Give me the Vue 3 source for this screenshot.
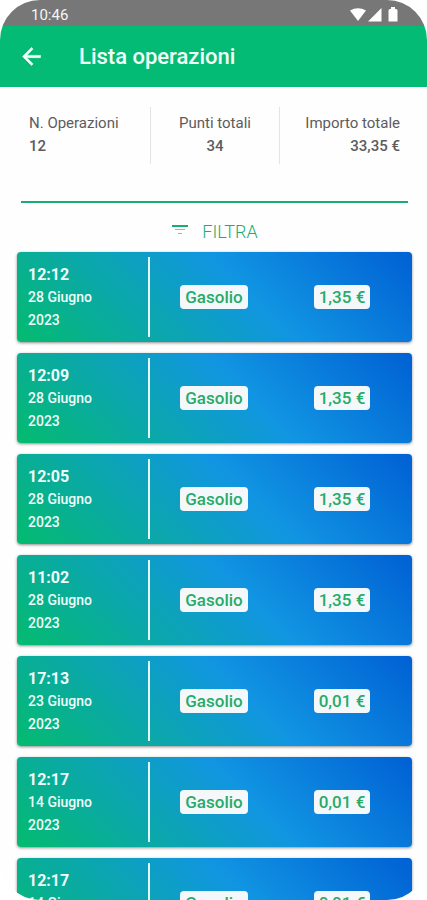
<template>
  <div class="screen">
    <div class="status-bar">
      <span>10:46</span>
      <svg class="status-icons" viewBox="0 0 50 16" aria-hidden="true">
        <path d="M0 3.5Q8 -1 16 3.5L8 14Z" />
        <path d="M31.500 1V14.500H18Z" />
        <path d="M38.500 3.500Q38.500 2 40 2H41V0H45V2H46Q47.500 2 47.500 3.500V14.500H38.500Z" />
      </svg>
    </div>

    <header class="app-bar">
      <button class="back" type="button" aria-label="Indietro">
        <svg viewBox="0 0 24 24" aria-hidden="true">
          <path d="M20 11H7.830l5.590-5.590L12 4l-8 8 8 8 1.410-1.410L7.830 13H20v-2z" />
        </svg>
      </button>
      <h1>Lista operazioni</h1>
    </header>

    <dl class="summary">
      <div v-for="item in summary" :key="item.label" class="summary-item">
        <dt>{{ item.label }}</dt>
        <dd>{{ item.value }}</dd>
      </div>
    </dl>

    <button class="filter" type="button">
      <svg viewBox="0 0 18 12" aria-hidden="true">
        <path class="line-top" d="M1 2H17" />
        <path class="line" d="M4 5.500H14" />
        <path class="line" d="M7 9.500H11" />
      </svg>
      <span>FILTRA</span>
    </button>

    <ul class="operations">
      <li v-for="op in operations" :key="op.id" class="operation">
        <div class="when">
          <strong>{{ op.time }}</strong>
          <span>{{ op.day }}</span>
          <span>{{ op.year }}</span>
        </div>
        <div class="details">
          <div><span class="tag">{{ op.product }}</span></div>
          <div><span class="tag">{{ op.amount }}</span></div>
        </div>
      </li>
    </ul>
  </div>
</template>

<script setup>
const summary = [
  { label: 'N. Operazioni', value: '12' },
  { label: 'Punti totali', value: '34' },
  { label: 'Importo totale', value: '33,35 €' },
];

const operations = [
  { id: 1, time: '12:12', day: '28 Giugno', year: '2023', product: 'Gasolio', amount: '1,35 €' },
  { id: 2, time: '12:09', day: '28 Giugno', year: '2023', product: 'Gasolio', amount: '1,35 €' },
  { id: 3, time: '12:05', day: '28 Giugno', year: '2023', product: 'Gasolio', amount: '1,35 €' },
  { id: 4, time: '11:02', day: '28 Giugno', year: '2023', product: 'Gasolio', amount: '1,35 €' },
  { id: 5, time: '17:13', day: '23 Giugno', year: '2023', product: 'Gasolio', amount: '0,01 €' },
  { id: 6, time: '12:17', day: '14 Giugno', year: '2023', product: 'Gasolio', amount: '0,01 €' },
  { id: 7, time: '12:17', day: '14 Giugno', year: '2023', product: 'Gasolio', amount: '0,01 €' },
];
</script>

<style>
body { background: #fff; }
</style>

<style scoped>
.screen {
  display: flex;
  flex-direction: column;
  height: 100vh;
  overflow: hidden;
  border-radius: 40px;
  background: #fefefe;
  color: #5c5c5c;
  font-family: Roboto, sans-serif;
}

.status-bar {
  display: flex;
  flex: none;
  align-items: center;
  justify-content: space-between;
  height: 26px;
  padding: 3px 27px 0 31px;
  box-sizing: border-box;
  background: #777;
  color: #f4f4f4;
  font-size: 15px;
}
.status-icons { width: 50px; height: 16px; fill: #fff; }

.app-bar {
  display: flex;
  flex: none;
  align-items: center;
  gap: 34px;
  height: 61px;
  padding: 0 18px;
  background: #04bb75;
  color: #f2fff8;
}
.back { display: grid; padding: 0; border: 0; background: none; cursor: pointer; }
.back svg { width: 27px; height: 27px; fill: #f2fff8; stroke: #f2fff8; stroke-width: 0.5; }
h1 { margin: 0; font-size: 22px; font-weight: 500; line-height: 28px; }

.summary {
  display: grid;
  flex: none;
  grid-template-columns: repeat(3, 1fr);
  margin: 0 19px 0 21px;
  padding: 20px 0 37px;
  border-bottom: 2px solid #16ae72;
}
.summary-item {
  padding: 5px 0 6px;
  text-align: center;
  font-size: 15px;
  line-height: 23px;
}
.summary-item:first-child { padding-left: 8px; text-align: left; }
.summary-item:last-child { padding-right: 8px; text-align: right; }
.summary-item + .summary-item { border-left: 1px solid #e4e4e4; }
.summary dd { margin: 0; font-weight: 500; }

.filter {
  display: flex;
  flex: none;
  align-items: center;
  justify-content: center;
  gap: 13px;
  height: 49px;
  padding: 8px 0 0 2px;
  border: 0;
  background: none;
  color: #16ae72;
  font: 300 18px/24px Roboto, sans-serif;
  cursor: pointer;
}
.filter svg { width: 18px; height: 12px; margin-bottom: 4px; stroke: #16ae72; }
.line-top { stroke-width: 2; }
.line { opacity: 0.6; }

.operations {
  display: flex;
  flex-direction: column;
  gap: 11px;
  margin: 0;
  padding: 0 15px 0 17px;
  list-style: none;
}
.operation {
  display: flex;
  flex: none;
  height: 90px;
  padding: 5px 0;
  box-sizing: border-box;
  border-radius: 4px;
  background: linear-gradient(45deg, #04bb6e, #1195e2 58%, #0060d4);
  box-shadow: 0 1px 3px rgba(0, 0, 0, 0.45);
  color: #effcf9;
}
.when {
  display: flex;
  flex: 0 0 133px;
  flex-direction: column;
  justify-content: center;
  padding-left: 11px;
  box-sizing: border-box;
  border-right: 2px solid #e3f7f6;
  font-size: 14px;
  line-height: 23px;
}
.when strong { font-size: 16px; font-weight: 700; }
.when span { font-weight: 500; }
.details {
  display: grid;
  flex: 1;
  grid-template-columns: 1fr 1fr;
  align-items: center;
  padding-right: 6px;
  text-align: center;
}
.tag {
  display: inline-block;
  padding: 0 5px;
  border-radius: 4px;
  background: #f5f8fa;
  color: #26ab68;
  font-size: 17px;
  font-weight: 500;
  line-height: 24px;
}
</style>
